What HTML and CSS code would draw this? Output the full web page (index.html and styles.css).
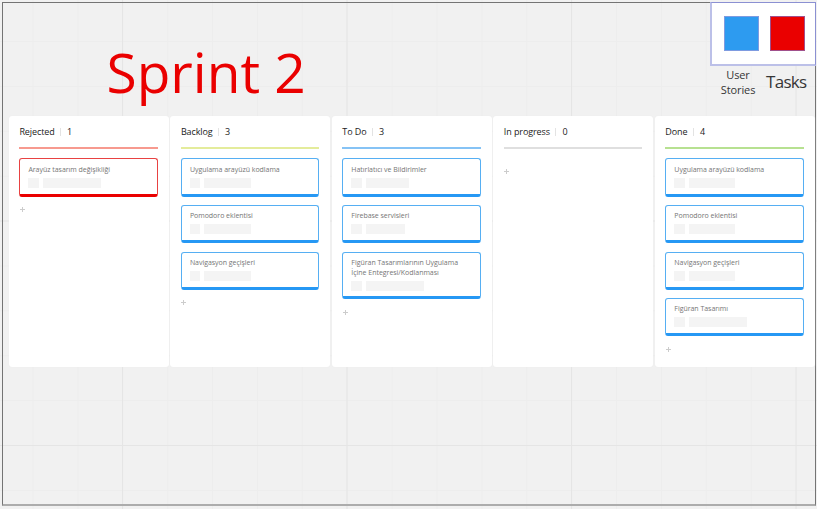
FILE: index.html
```html
<!DOCTYPE html>
<html lang="tr">
<head>
<meta charset="utf-8">
<title>Sprint 2</title>
<link rel="stylesheet" href="styles.css">
</head>
<body>
<main class="frame">
  <header class="top">
    <h1 class="title">Sprint 2</h1>
    <aside class="legend">
      <div class="swatches"><span class="swatch story"></span><span class="swatch task"></span></div>
      <div class="labels"><span class="label-story">User<br>Stories</span><span class="label-task">Tasks</span></div>
    </aside>
  </header>
  <div class="board">
    <section class="column rejected">
      <h2 class="head"><span class="name">Rejected</span><i class="sep"></i><span>1</span></h2>
      <article class="card red"><p>Arayüz tasarım değişikliği</p><div class="meta"><i></i><b class="long"></b></div></article>
      <div class="add"></div>
    </section>
    <section class="column backlog">
      <h2 class="head"><span class="name">Backlog</span><i class="sep"></i><span>3</span></h2>
      <article class="card"><p>Uygulama arayüzü kodlama</p><div class="meta"><i></i><b></b></div></article>
      <article class="card"><p>Pomodoro eklentisi</p><div class="meta"><i></i><b></b></div></article>
      <article class="card"><p>Navigasyon geçişleri</p><div class="meta"><i></i><b></b></div></article>
      <div class="add"></div>
    </section>
    <section class="column todo">
      <h2 class="head"><span class="name">To Do</span><i class="sep"></i><span>3</span></h2>
      <article class="card"><p>Hatırlatıcı ve Bildirimler</p><div class="meta"><i></i><b class="medium"></b></div></article>
      <article class="card"><p>Firebase servisleri</p><div class="meta"><i></i><b class="short"></b></div></article>
      <article class="card tall"><p>Figüran Tasarımlarının Uygulama<br>İçine Entegresi/Kodlanması</p><div class="meta"><i></i><b class="long"></b></div></article>
      <div class="add"></div>
    </section>
    <section class="column progress">
      <h2 class="head"><span class="name">In progress</span><i class="sep"></i><span>0</span></h2>
      <div class="add"></div>
    </section>
    <section class="column done">
      <h2 class="head"><span class="name">Done</span><i class="sep"></i><span>4</span></h2>
      <article class="card"><p>Uygulama arayüzü kodlama</p><div class="meta"><i></i><b></b></div></article>
      <article class="card"><p>Pomodoro eklentisi</p><div class="meta"><i></i><b></b></div></article>
      <article class="card"><p>Navigasyon geçişleri</p><div class="meta"><i></i><b></b></div></article>
      <article class="card"><p>Figüran Tasarımı</p><div class="meta"><i></i><b class="long"></b></div></article>
      <div class="add"></div>
    </section>
  </div>
</main>
</body>
</html>
```
FILE: styles.css
```css
* { box-sizing: border-box; margin: 0; padding: 0; }
body {
  width: 817px;
  height: 509px;
  padding: 2px 1px 3px 2px;
  overflow: hidden;
  font-family: "Open Sans", "Noto Sans", sans-serif;
  background-color: #f1f1f1;
  background-image:
    linear-gradient(90deg, #e5e5e5 1px, transparent 1px),
    linear-gradient(#e5e5e5 1px, transparent 1px),
    linear-gradient(90deg, #ededed 1px, transparent 1px),
    linear-gradient(#ededed 1px, transparent 1px);
  background-size: 224.5px 100%, 100% 224.5px, 44.9px 100%, 100% 44.9px;
  background-position: 122px 0, 0 445px, 32.5px 0, 0 41px;
}
.frame {
  height: 504px;
  border: 1px solid #747474;
  border-bottom: 2px solid #acacac;
}
.top { display: flex; justify-content: space-between; height: 113px; }
.title {
  margin: 32px 0 0 103.5px;
  font-size: 55px;
  line-height: 74px;
  font-weight: 400;
  color: #ea0000;
  white-space: nowrap;
}
.legend { width: 106px; margin: -1px -1px 0 0; }
.swatches {
  display: flex;
  gap: 11px;
  height: 64px;
  padding: 13px 0 0 12px;
  background: #fff;
  border: 1px solid;
  border-width: 1px 1px 2px 2px;
  border-color: #8b90d2 #8b90d2 #bcc0e8 #bcc0e8;
}
.swatch { width: 35px; height: 35px; border: 1px solid #7e9be0; }
.story { background: #2d9bf0; }
.task { background: #ea0000; border-color: #a0508c; }
.labels { display: flex; color: #363636; }
.label-story { width: 56px; padding-top: 1px; font-size: 11px; line-height: 15px; text-align: center; letter-spacing: -0.1px; }
.label-task { font-size: 17px; line-height: 24px; padding-top: 4px; letter-spacing: -0.7px; }
.board {
  display: grid;
  grid-template-columns: repeat(5, 159.7px);
  gap: 1.8px;
  height: 251px;
  margin-left: 5.9px;
}
.column { background: #fff; border-radius: 3px; padding: 0 10.8px 0 10.5px; box-shadow: 0 0 1px #e8e8e8; }
.head {
  display: flex;
  align-items: center;
  height: 33px;
  border-bottom: 2px solid var(--accent);
  margin-bottom: 9.4px;
  font-size: 9px;
  font-weight: 400;
  letter-spacing: -0.1px;
  color: #222;
  white-space: nowrap;
}
.sep { width: 1px; height: 8px; margin: 0 6px 0 5.5px; background: #e3e3e3; }
.rejected { --accent: #f79a8f; }
.backlog { --accent: #e4ec9b; }
.todo { --accent: #86c3f5; }
.progress { --accent: #dfdfdf; }
.done { --accent: #b7e191; }
.card {
  height: 38.2px;
  margin-bottom: 8.4px;
  padding: 5.3px 0 0 8px;
  border: 1px solid #56aff3;
  border-bottom: 3px solid #2698f4;
  border-radius: 3px;
}
.card p { font-size: 7px; line-height: 10px; color: #757575; white-space: nowrap; letter-spacing: -0.03px; }
.red { border-color: #e84242; border-bottom-color: #ea0000; }
.tall { height: 47.8px; }
.meta { display: flex; gap: 4px; margin-top: 3px; }
.meta i, .meta b { width: 10.5px; height: 10px; background: #f4f4f4; }
.meta b { width: 46.5px; }
.meta .long { width: 58.5px; }
.meta .medium { width: 43px; }
.meta .short { width: 39.5px; }
.add {
  width: 7px;
  height: 7px;
  margin: 9.5px 0 0 -0.5px;
  background:
    linear-gradient(#ccc, #ccc) center / 1px 5px no-repeat,
    linear-gradient(#ccc, #ccc) center / 5px 1px no-repeat;
}
.progress .add { margin-top: 19px; }
```
